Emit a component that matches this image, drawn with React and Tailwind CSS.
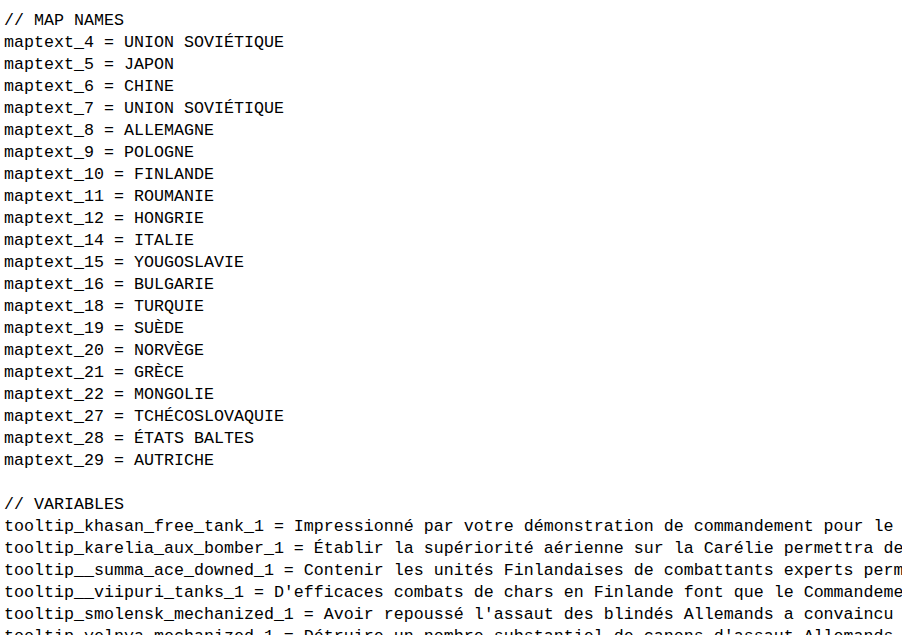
export default function App() {
  const lines = [
    "// MAP NAMES",
    "maptext_4 = UNION SOVIÉTIQUE",
    "maptext_5 = JAPON",
    "maptext_6 = CHINE",
    "maptext_7 = UNION SOVIÉTIQUE",
    "maptext_8 = ALLEMAGNE",
    "maptext_9 = POLOGNE",
    "maptext_10 = FINLANDE",
    "maptext_11 = ROUMANIE",
    "maptext_12 = HONGRIE",
    "maptext_14 = ITALIE",
    "maptext_15 = YOUGOSLAVIE",
    "maptext_16 = BULGARIE",
    "maptext_18 = TURQUIE",
    "maptext_19 = SUÈDE",
    "maptext_20 = NORVÈGE",
    "maptext_21 = GRÈCE",
    "maptext_22 = MONGOLIE",
    "maptext_27 = TCHÉCOSLOVAQUIE",
    "maptext_28 = ÉTATS BALTES",
    "maptext_29 = AUTRICHE",
    "",
    "// VARIABLES",
    "tooltip_khasan_free_tank_1 = Impressionné par votre démonstration de commandement pour le déploiement",
    "tooltip_karelia_aux_bomber_1 = Établir la supériorité aérienne sur la Carélie permettra de soutenir",
    "tooltip__summa_ace_downed_1 = Contenir les unités Finlandaises de combattants experts permettra",
    "tooltip__viipuri_tanks_1 = D'efficaces combats de chars en Finlande font que le Commandement",
    "tooltip_smolensk_mechanized_1 = Avoir repoussé l'assaut des blindés Allemands a convaincu le",
    "tooltip_yelnya_mechanized_1 = Détruire un nombre substantiel de canons d'assaut Allemands a",
  ];
  return (
    <div className="w-[902px] h-[635px] overflow-hidden bg-white pt-[10px] pl-[4px]">
      {lines.map((l, i) => (
        <div
          key={i}
          className="h-[22px] leading-[22px] whitespace-pre text-[16.67px] text-black"
          style={{ fontFamily: '"Liberation Mono", monospace' }}
        >
          {l || "\u00a0"}
        </div>
      ))}
    </div>
  );
}
